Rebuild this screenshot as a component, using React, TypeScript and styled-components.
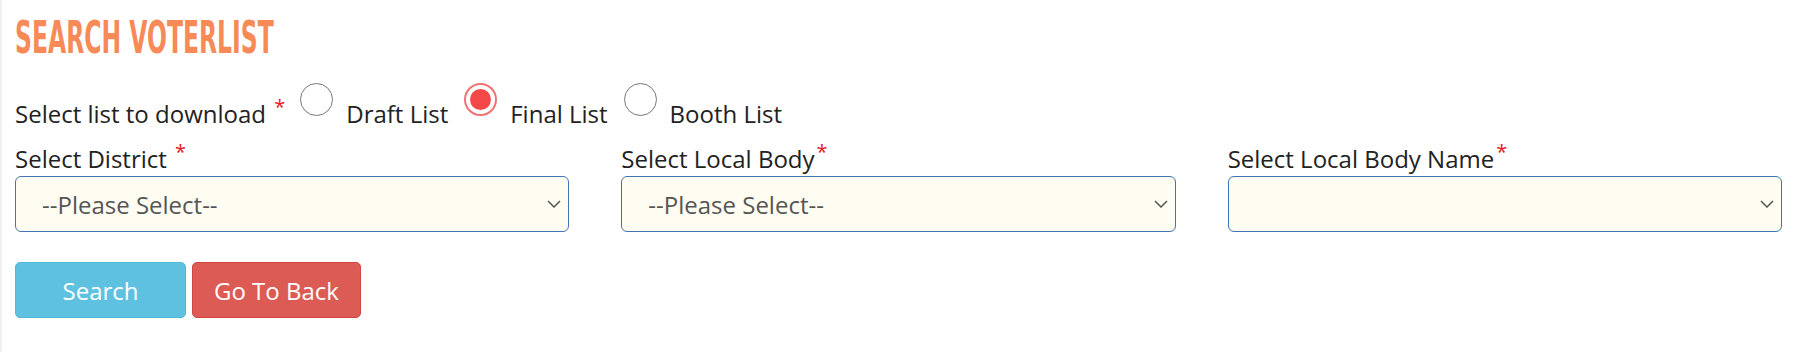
import React, { useState } from "react";
import styled, { createGlobalStyle } from "styled-components";

const GlobalStyle = createGlobalStyle`
  body {
    margin: 0;
    background: #fff;
    font-family: "Open Sans", "Noto Sans", sans-serif;
    color: #222;
  }
`;

const Page = styled.div`
  box-sizing: border-box;
  height: 352px;
  padding: 0 18px 0 15px;
  box-shadow: inset 2px 0 0 #f1f1f1;
`;

const TitleBar = styled.div`
  padding-top: 16px;
  height: 44px;
`;

const Title = styled.h2`
  display: inline-block;
  margin: 0;
  font-family: "DejaVu Sans Condensed", "DejaVu Sans", sans-serif;
  font-weight: 700;
  font-size: 45px;
  line-height: 44px;
  color: #f78a57;
  white-space: nowrap;
  transform: scaleX(0.58);
  transform-origin: left center;
`;

const ListRow = styled.div`
  display: flex;
  align-items: flex-start;
  margin-top: 23px;
  font-size: 24px;
  line-height: 32px;
`;

const RowLabel = styled.span`
  padding-top: 15px;
  white-space: nowrap;
`;

const Star = styled.sup`
  color: #e31b1b;
  font-size: 20px;
  line-height: 0;
  vertical-align: 9px;
  margin-left: 2px;
`;

const Option = styled.label`
  display: flex;
  align-items: flex-start;
  margin-left: 16px;
  cursor: pointer;
  &:first-of-type {
    margin-left: 15px;
  }
`;

const RadioCircle = styled.span<{ $checked?: boolean }>`
  box-sizing: border-box;
  flex-shrink: 0;
  width: 33px;
  height: 33px;
  border-radius: 50%;
  background: #fff;
  border: ${(p) => (p.$checked ? "2px solid #f27272" : "1.5px solid #777")};
  display: flex;
  align-items: center;
  justify-content: center;
  &::after {
    content: "";
    display: ${(p) => (p.$checked ? "block" : "none")};
    width: 21px;
    height: 21px;
    border-radius: 50%;
    background: #f44848;
  }
`;

const OptionText = styled.span`
  padding-top: 15px;
  margin-left: 13px;
  white-space: nowrap;
`;

const FieldGrid = styled.div`
  display: grid;
  grid-template-columns: repeat(3, 1fr);
  column-gap: 52px;
  margin-top: 13px;
`;

const Field = styled.div`
  display: flex;
  flex-direction: column;
`;

const FieldLabel = styled.label`
  font-size: 24px;
  line-height: 32px;
  white-space: nowrap;
`;

const SelectWrap = styled.div`
  position: relative;
  margin-top: 1px;
`;

const Select = styled.select`
  box-sizing: border-box;
  width: 100%;
  height: 56px;
  padding: 0 40px 0 26px;
  appearance: none;
  background: #fffdf1;
  border: 1.5px solid #3f74b5;
  border-radius: 6px;
  font-family: "Open Sans", "Noto Sans", sans-serif;
  font-size: 24px;
  color: #555;
  outline: none;
`;

const Chevron = styled.svg`
  position: absolute;
  right: 8px;
  top: 50%;
  margin-top: -4px;
  pointer-events: none;
`;

const Actions = styled.div`
  display: flex;
  gap: 6px;
  margin-top: 30px;
`;

const Button = styled.button<{ $variant: "info" | "danger"; $width?: number }>`
  box-sizing: border-box;
  height: 56px;
  ${(p) => (p.$width ? `width: ${p.$width}px;` : "padding: 0 21px;")}
  border-radius: 5px;
  border: 1px solid ${(p) => (p.$variant === "info" ? "#4fb9da" : "#d2463f")};
  background: ${(p) => (p.$variant === "info" ? "#5fc1e0" : "#dc5b55")};
  color: #fff;
  font-family: "Open Sans", "Noto Sans", sans-serif;
  font-size: 24px;
  cursor: pointer;
`;

const options = [
  { id: "draft", label: "Draft List" },
  { id: "final", label: "Final List" },
  { id: "booth", label: "Booth List" },
];

const fields = [
  { label: "Select District ", placeholder: "--Please Select--" },
  { label: "Select Local Body", placeholder: "--Please Select--" },
  { label: "Select Local Body Name", placeholder: "" },
];

export default function App() {
  const [list, setList] = useState("final");

  return (
    <Page>
      <GlobalStyle />
      <TitleBar>
        <Title>SEARCH VOTERLIST</Title>
      </TitleBar>
      <ListRow>
        <RowLabel>
          Select list to download <Star>*</Star>
        </RowLabel>
        {options.map((o) => (
          <Option key={o.id} onClick={() => setList(o.id)}>
            <RadioCircle $checked={list === o.id} />
            <OptionText>{o.label}</OptionText>
          </Option>
        ))}
      </ListRow>
      <FieldGrid>
        {fields.map((f) => (
          <Field key={f.label}>
            <FieldLabel>
              {f.label}
              <Star>*</Star>
            </FieldLabel>
            <SelectWrap>
              <Select defaultValue="">
                <option value="">{f.placeholder}</option>
              </Select>
              <Chevron width="14" height="8" viewBox="0 0 14 8">
                <path d="M1 1l6 6 6-6" fill="none" stroke="#555" strokeWidth="1.5" />
              </Chevron>
            </SelectWrap>
          </Field>
        ))}
      </FieldGrid>
      <Actions>
        <Button $variant="info" $width={171}>
          Search
        </Button>
        <Button $variant="danger">Go To Back</Button>
      </Actions>
    </Page>
  );
}
